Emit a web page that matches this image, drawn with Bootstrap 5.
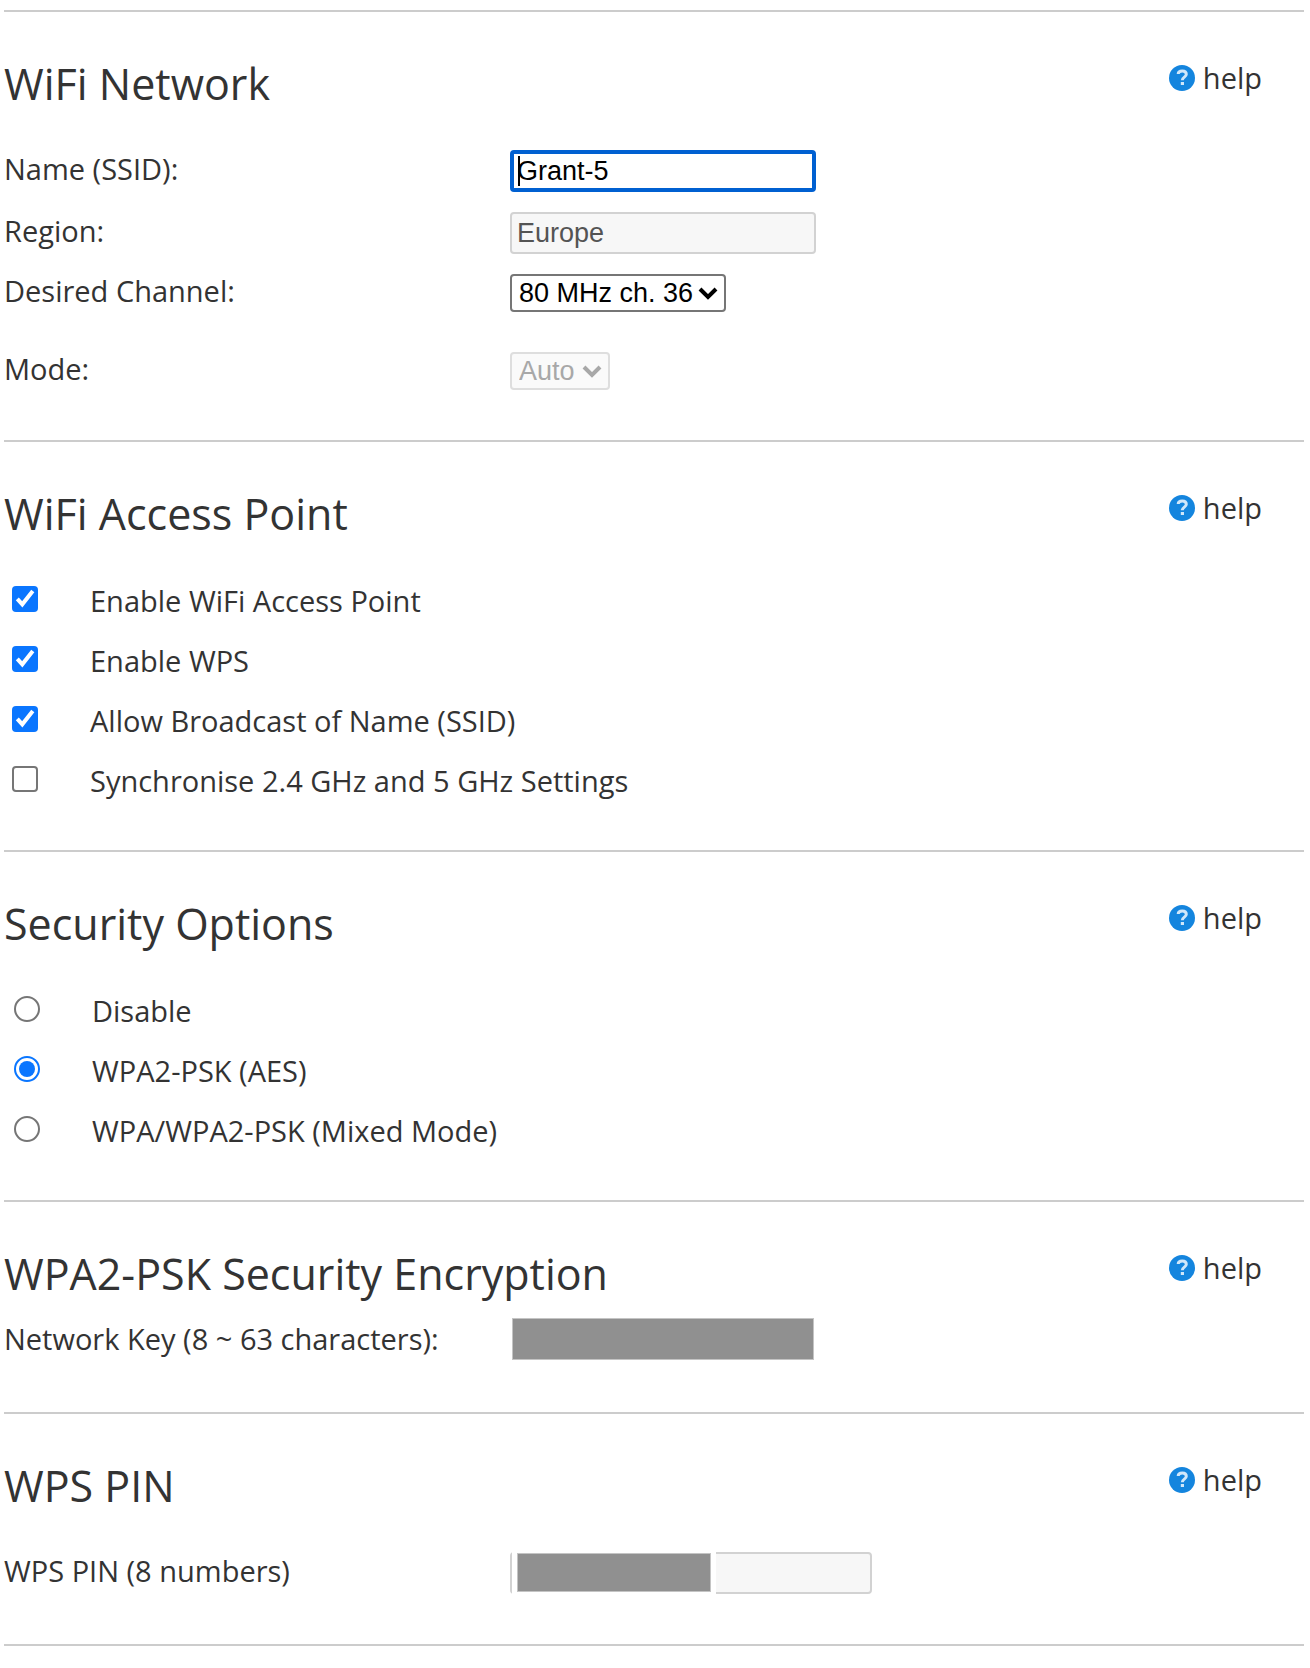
<!DOCTYPE html>
<html lang="en">
<head>
<meta charset="utf-8">
<meta name="viewport" content="width=device-width, initial-scale=1">
<title>WiFi Settings</title>
<link href="https://cdn.jsdelivr.net/npm/bootstrap@5.3.0/dist/css/bootstrap.min.css" rel="stylesheet">
<style>
  body { font-family: "Open Sans", "Noto Sans", sans-serif; font-size: 29px; color: #333; background: #fff; }
  .settings { padding: 10px 6px 0 4px; }
  .panel { border-top: 2px solid #ccc; padding: 42px 0 50px; }
  .panel-choices { padding-bottom: 38px; }
  .panel-key { padding-bottom: 52px; }
  .panel-end { border-top: 2px solid #ccc; }
  .panel-title { font-size: 43px; line-height: 60px; font-weight: 400; color: #333; margin: 0; }
  .panel-head { margin-bottom: 36px; }
  .panel-choices .panel-head { margin-bottom: 28px; }
  .panel-key .panel-head { margin-bottom: 14px; }
  .help-link { color: #333; line-height: 40px; gap: 8px; margin: 4px 42px 0 0; }
  .fields { gap: 20px; }
  .field-label { flex: 0 0 506px; line-height: 38px; }
  .panel-key .field-label { line-height: 42px; }
  .field-label.pick-label { line-height: 34px; }
  .field-box, .field-pick { font-family: "Liberation Sans", Arial, sans-serif; font-size: 27px; border-radius: 4px; }
  .field-box { width: 306px; height: 42px; padding: 0 5px; border: 2px solid #d2d2d2; line-height: 38px; color: #000; }
  .field-box:disabled { background: #f7f7f7; color: #545454; opacity: 1; }
  .field-box.is-current, .field-box.is-current:focus { border: 4px solid #0060d1; padding: 0 3px; box-shadow: none; background: #fff; color: #000; line-height: 34px; }
  .caret { position: absolute; left: 8px; top: 6px; width: 2px; height: 30px; background: #000; }
  .field-pick { height: 38px; padding: 0 26px 0 7px; line-height: 34px; border: 2px solid #767676; color: #000; background-color: #fff; background-position: right 6px center; background-size: 20px 14px;
    background-image: url("data:image/svg+xml,%3Csvg xmlns='http://www.w3.org/2000/svg' viewBox='0 0 20 14'%3E%3Cpath d='M2 3l8 8 8-8' fill='none' stroke='%23000' stroke-width='4'/%3E%3C/svg%3E"); }
  .pick-channel { width: 216px; }
  .pick-mode { width: 100px; }
  .mode-row { margin-top: 20px; }
  .field-pick:disabled { color: #a8a8a8; border-color: #dedede; background-color: #fafafa; opacity: 1;
    background-image: url("data:image/svg+xml,%3Csvg xmlns='http://www.w3.org/2000/svg' viewBox='0 0 20 14'%3E%3Cpath d='M2 3l8 8 8-8' fill='none' stroke='%23a8a8a8' stroke-width='4'/%3E%3C/svg%3E"); }
  .field-box.hidden-key, .field-box.hidden-key:focus { width: 302px; margin-left: 2px; border: 1px solid #c4c4c4; border-radius: 0; background: #909090; box-shadow: none; }
  .field-box.pin-box { width: 362px; }
  .pin-mask { position: absolute; left: 2px; top: -1px; width: 204px; height: 44px; padding: 2px 5px 2px 5px; background: #fff; }
  .pin-mask span { display: block; height: 39px; background: #909090; border: 1px solid #c4c4c4; }
  .choice { min-height: 60px; }
  .choice-label { line-height: 58px; }
  .form-check-input.tick { flex: none; width: 26px; height: 26px; margin: 14px 52px 0 8px; border: 2px solid #767676; background-color: #fff; }
  .form-check-input.tick[type=checkbox] { border-radius: 4px; }
  .form-check-input.tick[type=radio] { margin-left: 10px; }
  .form-check-input.tick[type=checkbox]:checked { border: 0; background-color: #0a76ff; background-size: 26px 26px;
    background-image: url("data:image/svg+xml,%3Csvg xmlns='http://www.w3.org/2000/svg' viewBox='0 0 26 26'%3E%3Cpath d='M5.300 12.800l5 5.500L20.800 5' fill='none' stroke='%23fff' stroke-width='4'/%3E%3C/svg%3E"); }
  .form-check-input.tick[type=radio]:checked { border-color: #0a76ff; background-color: #fff; background-size: 22px 22px;
    background-image: url("data:image/svg+xml,%3Csvg xmlns='http://www.w3.org/2000/svg' viewBox='0 0 22 22'%3E%3Ccircle cx='11' cy='11' r='8' fill='%230a76ff'/%3E%3C/svg%3E"); }
</style>
</head>
<body>
<svg class="d-none" xmlns="http://www.w3.org/2000/svg">
  <symbol id="help-icon" viewBox="0 0 26 26">
    <circle cx="13" cy="13" r="13" fill="#1485de"/>
    <path d="M9.200 9C9.200 6.800 11 6 13.300 6c2.400 0 4 1.200 4 3.200 0 3-4 2.800-4 6" fill="none" stroke="#d0e7fa" stroke-width="3"/>
    <rect x="11.800" y="17" width="3.200" height="3" fill="#d0e7fa"/>
  </symbol>
</svg>
<main class="settings">
  <form>
    <section class="panel">
      <div class="panel-head d-flex justify-content-between align-items-start">
        <h2 class="panel-title">WiFi Network</h2>
        <a class="help-link d-flex align-items-center text-decoration-none" href="#"><svg width="26" height="26" aria-hidden="true"><use href="#help-icon"/></svg>help</a>
      </div>
      <div class="fields d-flex flex-column">
        <div class="d-flex align-items-start">
          <label class="field-label" for="ssid">Name (SSID):</label>
          <div class="position-relative"><input class="form-control field-box is-current" id="ssid" type="text" value="Grant-5"><span class="caret"></span></div>
        </div>
        <div class="d-flex align-items-start">
          <label class="field-label" for="region">Region:</label>
          <input class="form-control field-box" id="region" type="text" value="Europe" disabled>
        </div>
        <div class="d-flex align-items-start">
          <label class="field-label pick-label" for="channel">Desired Channel:</label>
          <select class="form-select field-pick pick-channel" id="channel"><option>80 MHz ch. 36</option></select>
        </div>
        <div class="mode-row d-flex align-items-start">
          <label class="field-label pick-label" for="mode">Mode:</label>
          <select class="form-select field-pick pick-mode" id="mode" disabled><option>Auto</option></select>
        </div>
      </div>
    </section>

    <section class="panel panel-choices">
      <div class="panel-head d-flex justify-content-between align-items-start">
        <h2 class="panel-title">WiFi Access Point</h2>
        <a class="help-link d-flex align-items-center text-decoration-none" href="#"><svg width="26" height="26" aria-hidden="true"><use href="#help-icon"/></svg>help</a>
      </div>
      <div class="choice d-flex align-items-start"><input class="form-check-input tick" type="checkbox" id="ap" checked><label class="choice-label" for="ap">Enable WiFi Access Point</label></div>
      <div class="choice d-flex align-items-start"><input class="form-check-input tick" type="checkbox" id="wps" checked><label class="choice-label" for="wps">Enable WPS</label></div>
      <div class="choice d-flex align-items-start"><input class="form-check-input tick" type="checkbox" id="broadcast" checked><label class="choice-label" for="broadcast">Allow Broadcast of Name (SSID)</label></div>
      <div class="choice d-flex align-items-start"><input class="form-check-input tick" type="checkbox" id="sync"><label class="choice-label" for="sync">Synchronise 2.4 GHz and 5 GHz Settings</label></div>
    </section>

    <section class="panel panel-choices">
      <div class="panel-head d-flex justify-content-between align-items-start">
        <h2 class="panel-title">Security Options</h2>
        <a class="help-link d-flex align-items-center text-decoration-none" href="#"><svg width="26" height="26" aria-hidden="true"><use href="#help-icon"/></svg>help</a>
      </div>
      <div class="choice d-flex align-items-start"><input class="form-check-input tick" type="radio" name="security" id="sec-off"><label class="choice-label" for="sec-off">Disable</label></div>
      <div class="choice d-flex align-items-start"><input class="form-check-input tick" type="radio" name="security" id="sec-wpa2" checked><label class="choice-label" for="sec-wpa2">WPA2-PSK (AES)</label></div>
      <div class="choice d-flex align-items-start"><input class="form-check-input tick" type="radio" name="security" id="sec-mixed"><label class="choice-label" for="sec-mixed">WPA/WPA2-PSK (Mixed Mode)</label></div>
    </section>

    <section class="panel panel-key">
      <div class="panel-head d-flex justify-content-between align-items-start">
        <h2 class="panel-title">WPA2-PSK Security Encryption</h2>
        <a class="help-link d-flex align-items-center text-decoration-none" href="#"><svg width="26" height="26" aria-hidden="true"><use href="#help-icon"/></svg>help</a>
      </div>
      <div class="d-flex align-items-start">
        <label class="field-label" for="key">Network Key (8 ~ 63 characters):</label>
        <input class="form-control field-box hidden-key" id="key" type="text">
      </div>
    </section>

    <section class="panel">
      <div class="panel-head d-flex justify-content-between align-items-start">
        <h2 class="panel-title">WPS PIN</h2>
        <a class="help-link d-flex align-items-center text-decoration-none" href="#"><svg width="26" height="26" aria-hidden="true"><use href="#help-icon"/></svg>help</a>
      </div>
      <div class="d-flex align-items-start">
        <label class="field-label" for="pin">WPS PIN (8 numbers)</label>
        <div class="position-relative"><input class="form-control field-box pin-box" id="pin" type="text" disabled><div class="pin-mask"><span></span></div></div>
      </div>
    </section>
    <div class="panel-end"></div>
  </form>
</main>
<script src="https://cdn.jsdelivr.net/npm/bootstrap@5.3.0/dist/js/bootstrap.bundle.min.js"></script>
</body>
</html>
